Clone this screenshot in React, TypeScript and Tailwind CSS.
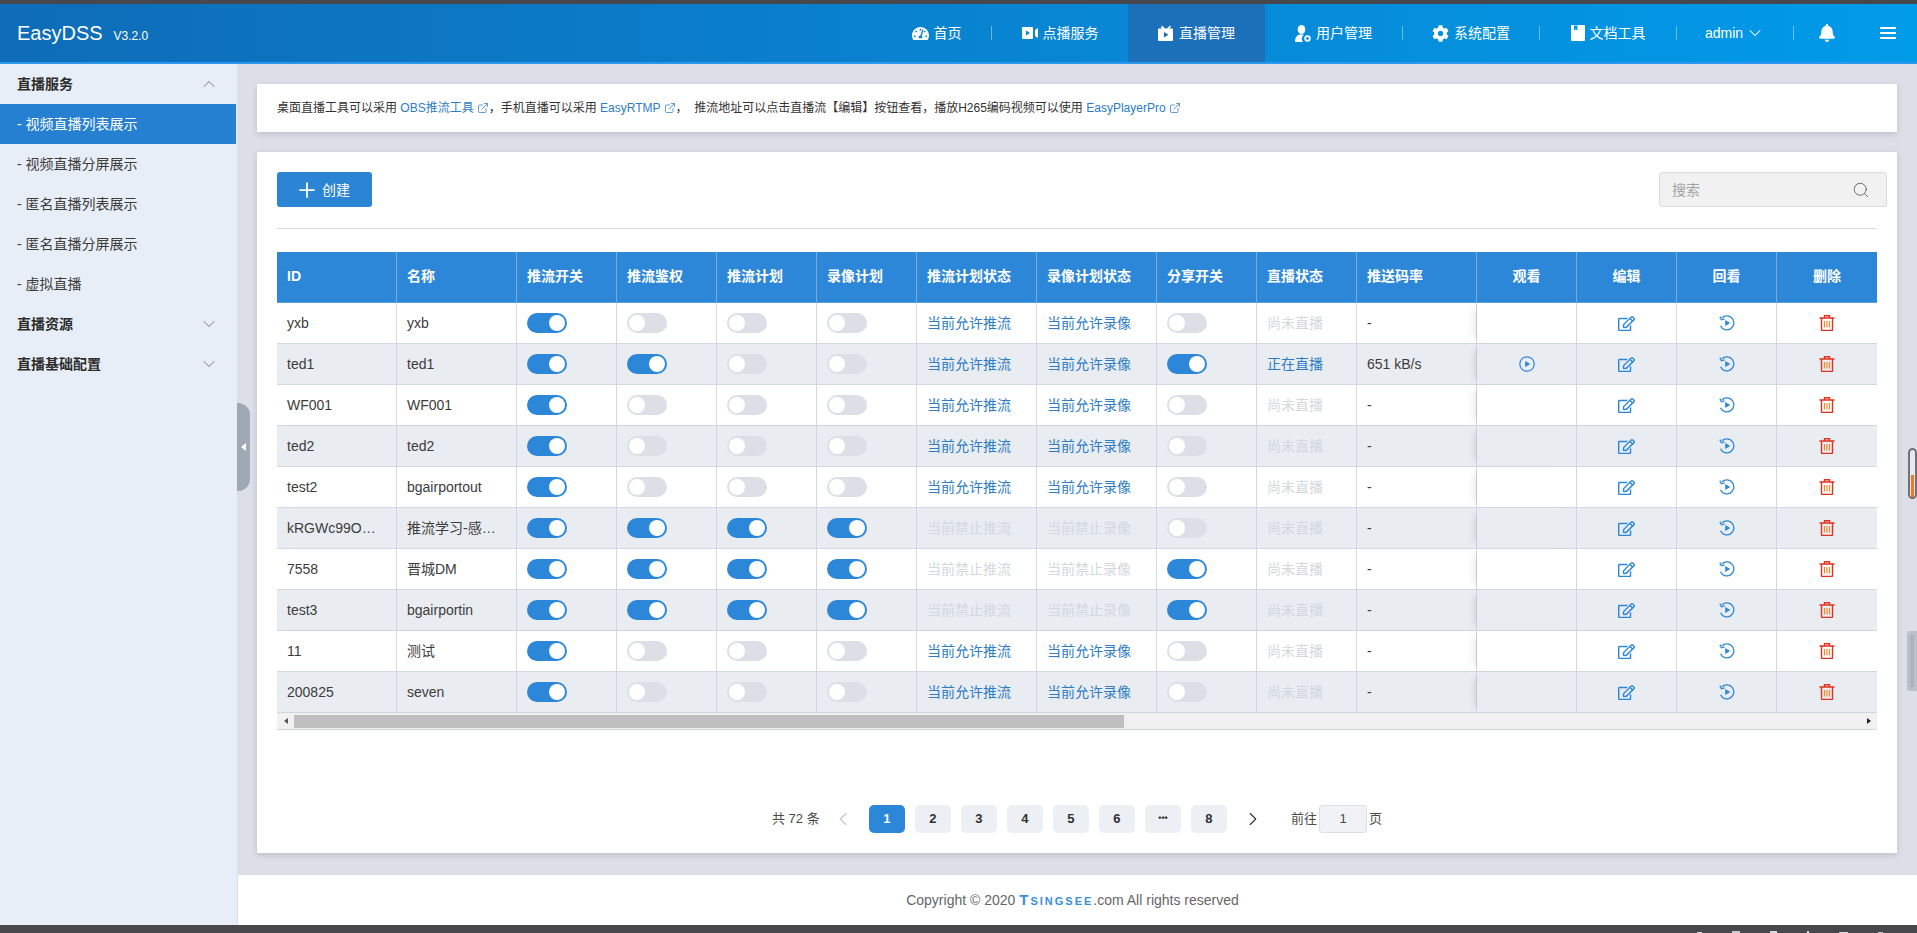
import { ChevronDown, ChevronLeft, ChevronRight, ChevronUp, ExternalLink, Plus, Search } from "lucide-react";
import { FaBell, FaCog, FaRegEdit, FaTachometerAlt } from "react-icons/fa";
import type { ReactNode } from "react";

type Row = {
  id: string;
  name: string;
  auth: boolean;
  plan: boolean;
  rec: boolean;
  share: boolean;
  allowed: boolean;
  live?: boolean;
  rate?: string;
};

const rows: Row[] = [
  { id: "yxb", name: "yxb", auth: false, plan: false, rec: false, share: false, allowed: true },
  { id: "ted1", name: "ted1", auth: true, plan: false, rec: false, share: true, allowed: true, live: true, rate: "651 kB/s" },
  { id: "WF001", name: "WF001", auth: false, plan: false, rec: false, share: false, allowed: true },
  { id: "ted2", name: "ted2", auth: false, plan: false, rec: false, share: false, allowed: true },
  { id: "test2", name: "bgairportout", auth: false, plan: false, rec: false, share: false, allowed: true },
  { id: "kRGWc99O…", name: "推流学习-感…", auth: true, plan: true, rec: true, share: false, allowed: false },
  { id: "7558", name: "晋城DM", auth: true, plan: true, rec: true, share: true, allowed: false },
  { id: "test3", name: "bgairportin", auth: true, plan: true, rec: true, share: true, allowed: false },
  { id: "11", name: "测试", auth: false, plan: false, rec: false, share: false, allowed: true },
  { id: "200825", name: "seven", auth: false, plan: false, rec: false, share: false, allowed: true },
];

const VideoIcon = () => (
  <svg width="16" height="14" viewBox="0 0 16 14" fill="white">
    <path d="M0 2a1 1 0 0 1 1-1h9a1 1 0 0 1 1 1v10a1 1 0 0 1-1 1H1a1 1 0 0 1-1-1z" />
    <path d="M13 4l3-2v10l-3-2z" />
    <path d="M4 4.500l4 2.500-4 2.500z" fill="#0785d2" />
  </svg>
);

const TvIcon = () => (
  <svg width="16" height="16" viewBox="0 0 16 16" fill="white">
    <path d="M4 0.500l3 3h2l3-3 1 1-2 2h3a1 1 0 0 1 1 1V15a1 1 0 0 1-1 1H1a1 1 0 0 1-1-1V4.500a1 1 0 0 1 1-1h3l-1-1z" />
    <path d="M6 7l4.500 2.700L6 12.400z" fill="#1c70ba" />
  </svg>
);

const UserGearIcon = () => (
  <svg width="16" height="17" viewBox="0 0 16 17" fill="white">
    <ellipse cx="6.500" cy="4.500" rx="3.800" ry="4.500" />
    <path d="M0 17c0-5 2-7.500 6.500-7.500 1 0 1.800.1 2.500.4A4.500 4.500 0 0 0 8 17z" />
    <circle cx="12.500" cy="13.500" r="2.300" fill="none" stroke="white" strokeWidth="1.800" />
  </svg>
);

const BookIcon = () => (
  <svg width="14" height="16" viewBox="0 0 14 16" fill="white">
    <path d="M0 1a1 1 0 0 1 1-1h12a1 1 0 0 1 1 1v14a1 1 0 0 1-1 1H1a1 1 0 0 1-1-1z" />
    <path d="M3 0.500h3.500v5L4.750 4.200 3 5.500z" fill="#0590e0" />
  </svg>
);

const MenuIcon = () => (
  <svg width="16" height="12" viewBox="0 0 16 12" fill="white">
    <rect width="16" height="2" />
    <rect y="5" width="16" height="2" />
    <rect y="10" width="16" height="2" />
  </svg>
);

const PlayIcon = () => (
  <svg width="16" height="16" viewBox="0 0 16 16" fill="none" stroke="#2d87d8" strokeWidth="1.200">
    <circle cx="8" cy="8" r="7.200" />
    <path d="M6.200 4.900l5 3.100-5 3.100z" fill="#2d87d8" stroke="none" />
  </svg>
);

const ReplayIcon = () => (
  <svg width="16" height="16" viewBox="0 0 16 16" fill="none" stroke="#2d87d8" strokeWidth="1.300">
    <path d="M3 2.800A7 7 0 1 1 1.500 10.800" />
    <path d="M.9 1.600l1.500 3.200 3.200-1" />
    <path d="M6.200 4.900l5 3.100-5 3.100z" fill="#2d87d8" stroke="none" />
  </svg>
);

const TrashIcon = () => (
  <svg width="16" height="16" viewBox="0 0 16 16" fill="none" stroke="#e0301e" strokeWidth="1.400">
    <path d="M.5 3h15M5.500 3V.8h5V3" />
    <path d="M2.500 3v11.500a1 1 0 0 0 1 1h9a1 1 0 0 0 1-1V3" />
    <path d="M5.500 6v6.500M8 6v6.500M10.500 6v6.500" stroke="#ea8a2c" strokeWidth="1.200" />
  </svg>
);

const NavSep = () => <span className="h-[14px] w-px bg-white/40" />;

const NavItem = ({ icon, label, className }: { icon: ReactNode; label: string; className: string }) => (
  <div className={`flex h-full items-center justify-center gap-[5px] text-sm text-white ${className}`}>
    {icon}
    <span>{label}</span>
  </div>
);

const Toggle = ({ on }: { on: boolean }) => (
  <div className={`flex h-5 w-10 items-center rounded-full px-0.5 ${on ? "justify-end bg-[#2d87d8]" : "justify-start bg-[#dcdfe6]"}`}>
    <div className="h-4 w-4 rounded-full bg-white" />
  </div>
);

const Doc = ({ children }: { children: ReactNode }) => (
  <span className="inline-flex items-center gap-[3px] text-[#2d7cc4]">
    {children}
    <ExternalLink size={12} strokeWidth={1.5} />
  </span>
);

const headers = ["ID", "名称", "推流开关", "推流鉴权", "推流计划", "录像计划", "推流计划状态", "录像计划状态", "分享开关", "直播状态", "推送码率"];
const colWidths = [
  "w-[120px]", "w-[120px]", "w-[100px]", "w-[100px]", "w-[100px]", "w-[100px]", "w-[120px]", "w-[120px]", "w-[100px]", "w-[100px]", "w-[120px]",
  "w-[100px]", "w-[100px]", "w-[100px]", "w-[100px]",
];

const Td = ({ children, center, shadow }: { children?: ReactNode; center?: boolean; shadow?: boolean }) => (
  <td
    className={`h-[41px] border-r border-b border-[#d0d7de] px-2.5 text-sm whitespace-nowrap text-[#3c3c3c] last:border-r-0 ${center ? "text-center" : ""} ${
      shadow ? "shadow-[-8px_0_8px_-6px_rgba(0,0,0,0.12)]" : ""
    }`}
  >
    {children}
  </td>
);

const Cell = ({ children }: { children: ReactNode }) => <div className="flex items-center justify-center">{children}</div>;

const Pager = ({ children, active }: { children: ReactNode; active?: boolean }) => (
  <div
    className={`flex h-7 w-9 items-center justify-center rounded-[5px] text-[13px] font-bold ${
      active ? "bg-[#2d87d8] text-white" : "bg-[#ecf0f4] text-[#303133]"
    }`}
  >
    {children}
  </div>
);

const sideItems = ["视频直播列表展示", "视频直播分屏展示", "匿名直播列表展示", "匿名直播分屏展示", "虚拟直播"];

const SideHead = ({ label, open }: { label: string; open?: boolean }) => (
  <div className="flex h-10 items-center justify-between pr-[18px] pl-[17px] text-sm font-bold text-[#2c2c2c]">
    <span>{label}</span>
    {open ? <ChevronUp size={20} strokeWidth={1} className="text-[#666]" /> : <ChevronDown size={20} strokeWidth={1} className="text-[#666]" />}
  </div>
);

export default function App() {
  return (
    <div className="relative flex h-screen flex-col overflow-hidden bg-[#dcdfe8] font-['Liberation_Sans','Noto_Sans_CJK_SC',sans-serif]">
      <div className="h-1 bg-[#47474c]" />

      <header className="flex h-[60px] shrink-0 items-center border-b-2 border-[#2b98ef] bg-gradient-to-r from-[#0e6cb8] to-[#009be9]">
        <div className="flex items-baseline pl-[17px] text-white">
          <span className="text-xl">EasyDSS</span>
          <span className="ml-[11px] text-xs">V3.2.0</span>
        </div>
        <nav className="ml-auto flex h-full items-center">
          <NavItem className="w-[109px]" icon={<FaTachometerAlt size={17} color="white" />} label="首页" />
          <NavSep />
          <NavItem className="w-[136px]" icon={<VideoIcon />} label="点播服务" />
          <NavItem className="w-[137px] bg-[#1c70ba]" icon={<TvIcon />} label="直播管理" />
          <NavItem className="w-[137px]" icon={<UserGearIcon />} label="用户管理" />
          <NavSep />
          <NavItem className="w-[136px]" icon={<FaCog size={17} color="white" />} label="系统配置" />
          <NavSep />
          <NavItem className="w-[136px]" icon={<BookIcon />} label="文档工具" />
          <NavSep />
          <div className="flex h-full w-[116px] items-center justify-center gap-0.5 text-sm text-white">
            admin
            <ChevronDown size={20} strokeWidth={1.25} />
          </div>
          <NavSep />
          <div className="flex h-full w-[66px] items-center justify-center">
            <FaBell size={18} color="white" />
          </div>
          <div className="flex h-full w-[57px] items-center justify-center pr-[1px]">
            <MenuIcon />
          </div>
        </nav>
      </header>

      <div className="flex min-h-0 flex-1">
        <aside className="w-[237px] shrink-0 bg-[#e8eef7]">
          <SideHead label="直播服务" open />
          {sideItems.map((item, i) => (
            <div
              key={item}
              className={`flex h-10 items-center pl-[17px] text-sm ${i === 0 ? "mr-px bg-[#2680d2] text-white" : "text-[#3c3c3c]"}`}
            >
              - {item}
            </div>
          ))}
          <SideHead label="直播资源" />
          <SideHead label="直播基础配置" />
        </aside>

        <main className="flex min-w-0 flex-1 flex-col">
          <div className="flex flex-1 flex-col gap-5 px-5 pt-5">
            <div className="flex h-12 items-center bg-white pl-5 text-xs text-[#333] shadow-[0_2px_6px_rgba(0,0,0,0.15)]">
              <span>桌面直播工具可以采用&nbsp;</span>
              <Doc>OBS推流工具</Doc>
              <span>，手机直播可以采用&nbsp;</span>
              <Doc>EasyRTMP</Doc>
              <span>，&nbsp; 推流地址可以点击直播流【编辑】按钮查看，播放H265编码视频可以使用&nbsp;</span>
              <Doc>EasyPlayerPro</Doc>
            </div>

            <div className="h-[701px] bg-white pt-5 shadow-[0_2px_6px_rgba(0,0,0,0.15)]">
              <div className="flex h-[35px] items-center justify-between pr-2.5 pl-5">
                <button className="flex h-[35px] w-[95px] items-center gap-[3px] rounded-[3px] bg-[#2b85d4] pl-[18px] text-sm text-white">
                  <Plus size={24} strokeWidth={1.75} />
                  创建
                </button>
                <div className="flex h-[35px] w-[228px] items-center justify-between rounded-[3px] border border-[#d8dadd] bg-[#f1f1f1] pr-[16px] pl-[12px] text-sm text-[#a3a3a3]">
                  搜索
                  <Search size={18} strokeWidth={1.25} className="text-[#666]" />
                </div>
              </div>
              <div className="mx-5 mt-[21px] h-px bg-[#d8dde4]" />

              <div className="mx-5 mt-[23px] w-[1600px]">
                <table className="w-[1600px] table-fixed border-separate border-spacing-0">
                  <colgroup>
                    {colWidths.map((w, i) => (
                      <col key={i} className={w} />
                    ))}
                  </colgroup>
                  <thead>
                    <tr>
                      {headers.map((h) => (
                        <th key={h} className="h-[51px] border-r border-b border-r-[#7fa9d2] border-b-[#5a9fdc] bg-[#2d87d8] px-2.5 pb-0.5 text-left text-sm font-bold text-white">
                          {h}
                        </th>
                      ))}
                      {["观看", "编辑", "回看", "删除"].map((h) => (
                        <th key={h} className="h-[51px] border-r border-b border-r-[#7fa9d2] border-b-[#5a9fdc] bg-[#2d87d8] px-2.5 pb-0.5 text-center text-sm font-bold text-white last:border-r-0">
                          {h}
                        </th>
                      ))}
                    </tr>
                  </thead>
                  <tbody>
                    {rows.map((r, i) => (
                      <tr key={r.id} className={i % 2 === 1 ? "bg-[#e9ecf1]" : "bg-white"}>
                        <Td>{r.id}</Td>
                        <Td>{r.name}</Td>
                        <Td><Toggle on /></Td>
                        <Td><Toggle on={r.auth} /></Td>
                        <Td><Toggle on={r.plan} /></Td>
                        <Td><Toggle on={r.rec} /></Td>
                        <Td>
                          <span className={r.allowed ? "text-[#2d7cc4]" : "text-[#d3d7de]"}>{r.allowed ? "当前允许推流" : "当前禁止推流"}</span>
                        </Td>
                        <Td>
                          <span className={r.allowed ? "text-[#2d7cc4]" : "text-[#d3d7de]"}>{r.allowed ? "当前允许录像" : "当前禁止录像"}</span>
                        </Td>
                        <Td><Toggle on={r.share} /></Td>
                        <Td>
                          <span className={r.live ? "text-[#2d7cc4]" : "text-[#d3d7de]"}>{r.live ? "正在直播" : "尚未直播"}</span>
                        </Td>
                        <Td>{r.rate ?? "-"}</Td>
                        <Td center shadow>
                          {r.live && (
                            <Cell>
                              <PlayIcon />
                            </Cell>
                          )}
                        </Td>
                        <Td center><Cell><FaRegEdit size={17} color="#2d87d8" /></Cell></Td>
                        <Td center><Cell><ReplayIcon /></Cell></Td>
                        <Td center><Cell><TrashIcon /></Cell></Td>
                      </tr>
                    ))}
                  </tbody>
                </table>

                <div className="flex h-[17px] items-center border-b border-[#d0d7de] bg-[#f1f1f1]">
                  <div className="flex w-[17px] justify-center">
                    <div className="h-0 w-0 border-y-[3px] border-r-[4px] border-y-transparent border-r-[#555]" />
                  </div>
                  <div className="h-[13px] w-[830px] bg-[#bfbfbf]" />
                  <div className="ml-auto flex w-[17px] justify-center">
                    <div className="h-0 w-0 border-y-[3px] border-l-[4px] border-y-transparent border-l-[#222]" />
                  </div>
                </div>
              </div>

              <div className="mt-[75px] flex h-7 items-center justify-center text-[13px] text-[#4a4a4a]">
                <span className="w-12">共 72 条</span>
                <div className="ml-[5px] flex w-9 justify-center">
                  <ChevronLeft size={22} strokeWidth={1.25} className="text-[#c0c4cc]" />
                </div>
                <div className="ml-2 flex gap-2.5">
                  <Pager active>1</Pager>
                  <Pager>2</Pager>
                  <Pager>3</Pager>
                  <Pager>4</Pager>
                  <Pager>5</Pager>
                  <Pager>6</Pager>
                  <Pager><span className="text-[9px]">•••</span></Pager>
                  <Pager>8</Pager>
                </div>
                <div className="ml-2 flex w-9 justify-center">
                  <ChevronRight size={22} strokeWidth={1.25} className="text-[#303133]" />
                </div>
                <span className="ml-5">前往</span>
                <div className="mx-0.5 flex h-7 w-12 items-center justify-center rounded-[3px] border border-[#dcdfe6] bg-[#f0f2f5]">1</div>
                <span>页</span>
              </div>
            </div>
          </div>

          <footer className="mt-[22px] ml-px flex h-[50px] shrink-0 items-center justify-center bg-white pr-[10px] text-sm text-[#666]">
            Copyright © 2020&nbsp;
            <span className="text-[11px] font-bold tracking-[2px] text-[#3a8fdc]">
              <span className="text-[15px]">T</span>SINGSEE
            </span>
            .com All rights reserved
          </footer>
        </main>
      </div>

      <div className="flex h-2 shrink-0 items-end gap-[30px] bg-[#47474c] pl-[1697px]">
        <span className="h-px w-[5px] bg-white/80" />
        <span className="h-0.5 w-2 bg-white/70" />
        <span className="h-0.5 w-[7px] bg-white/80" />
        <span className="h-0.5 w-0.5 bg-white/80" />
        <span className="h-px w-[9px] bg-white/80" />
        <span className="h-px w-[5px] bg-white/70" />
      </div>

      {/* sidebar collapse handle */}
      <div className="absolute top-[403px] left-[237px] flex h-[88px] w-[13px] items-center justify-center rounded-r-xl bg-[#9ea9b5]">
        <div className="h-0 w-0 border-y-[4px] border-r-[5px] border-y-transparent border-r-white" />
      </div>

      {/* floating widgets on the right edge */}
      <div className="absolute top-[448px] left-[1908px] flex h-[51px] w-[9px] flex-col justify-end rounded-full border-2 border-[#6f7175] bg-[#e6e8ee]">
        <div className="mx-auto h-[22px] w-[3px] bg-[#f47a20]" />
      </div>
      <div className="absolute top-[631px] left-[1907px] flex h-[60px] w-[10px] justify-center rounded-l-[3px] bg-[#bcc0ca] py-1">
        <div className="w-1 bg-[#aeb2bd]" />
      </div>
    </div>
  );
}
